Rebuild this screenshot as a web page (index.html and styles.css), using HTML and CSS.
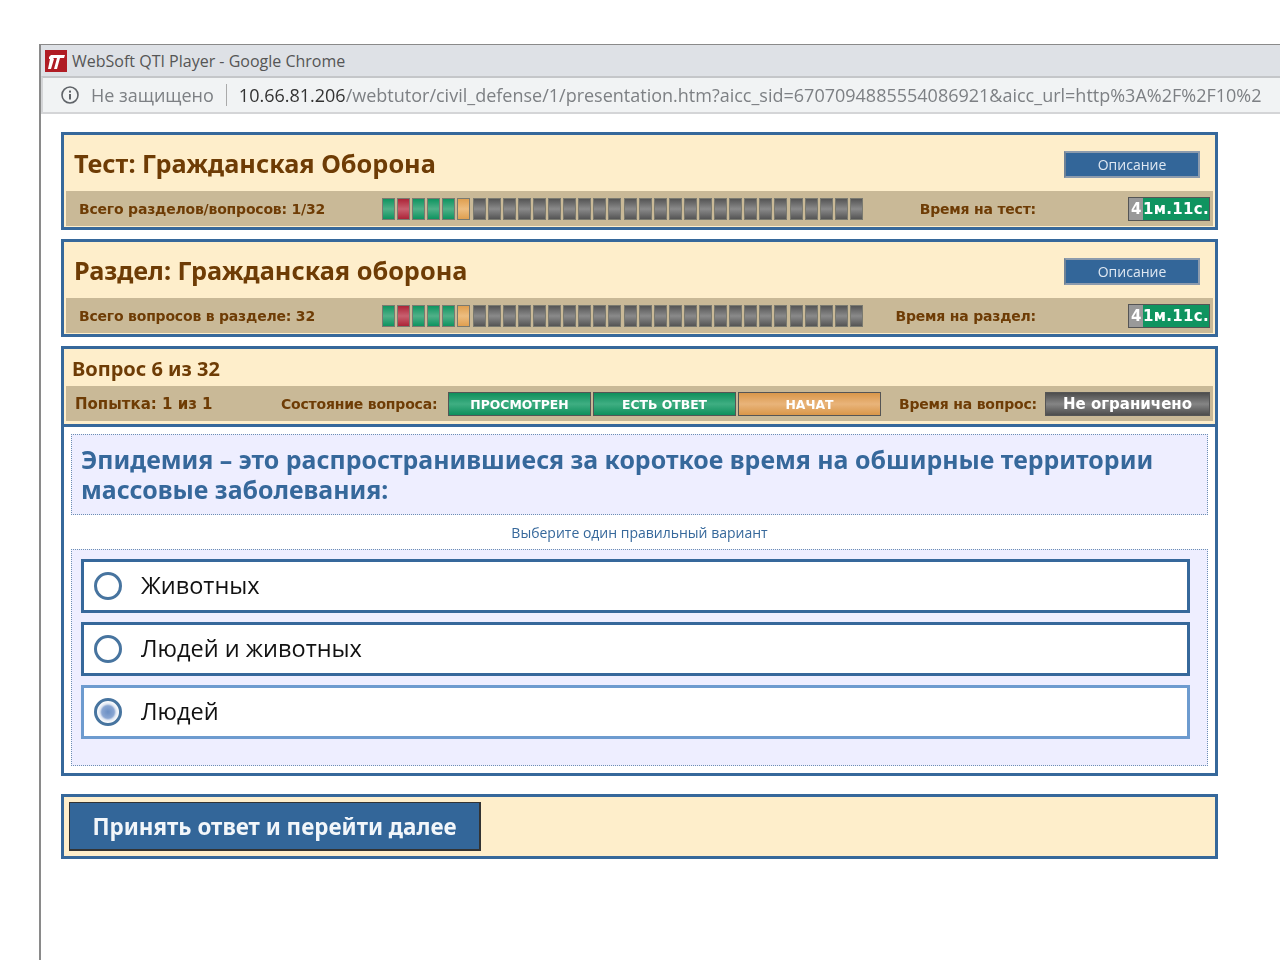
FILE: index.html
```html
<!DOCTYPE html>
<html lang="ru">

<head>
    <meta charset="UTF-8">
    <title>WebSoft QTI Player - Google Chrome</title>
    <link rel="stylesheet" href="styles.css">
</head>

<body>
    <div class="window">
        <div class="titlebar">
            <svg class="logo" width="22" height="22" viewBox="0 0 22 22">
                <rect width="22" height="22" fill="#b01c24"/>
                <path d="M5 9h4l-3 10H3z M4 7l2-2h14l-1 3h-4l-3 11H9l3-11H9l-1 1H4z" fill="#fff"/>
            </svg>
            <span>WebSoft QTI Player - Google Chrome</span>
        </div>
        <div class="addressbar">
            <svg class="info" width="20" height="20" viewBox="0 0 20 20">
                <circle cx="10" cy="10" r="8" fill="none" stroke="#5f6368" stroke-width="1.6"/>
                <rect x="9" y="9" width="2" height="5.5" fill="#5f6368"/>
                <rect x="9" y="5.6" width="2" height="2" fill="#5f6368"/>
            </svg>
            <span class="insecure">Не защищено</span>
            <span class="url"><b>10.66.81.206</b>/webtutor/civil_defense/1/presentation.htm?aicc_sid=6707094885554086921&amp;aicc_url=http%3A%2F%2F10%2</span>
        </div>

        <div class="content">
            <div class="panel">
                <div class="head">
                    <h1>Тест: Гражданская Оборона</h1>
                    <div class="descBtn">Описание</div>
                </div>
                <div class="bar">
                    <span class="barLabel firstLabel">Всего разделов/вопросов: 1/32</span>
                    <div class="progress"></div>
                    <span class="barLabel timeLabel wideGap">Время на тест:</span>
                    <div class="timer"><i>4</i>1м.11с.</div>
                </div>
            </div>

            <div class="panel">
                <div class="head">
                    <h1>Раздел: Гражданская оборона</h1>
                    <div class="descBtn">Описание</div>
                </div>
                <div class="bar">
                    <span class="barLabel firstLabel">Всего вопросов в разделе: 32</span>
                    <div class="progress"></div>
                    <span class="barLabel timeLabel wideGap">Время на раздел:</span>
                    <div class="timer"><i>4</i>1м.11с.</div>
                </div>
            </div>

            <div class="panel questionPanel">
                <div class="qHead">
                    <h2>Вопрос 6 из 32</h2>
                    <div class="bar qBar">
                        <span class="barLabel attempt">Попытка: 1 из 1</span>
                        <span class="barLabel stateLabel">Состояние вопроса:</span>
                        <div class="state green">ПРОСМОТРЕН</div>
                        <div class="state green">ЕСТЬ ОТВЕТ</div>
                        <div class="state orange">НАЧАТ</div>
                        <span class="barLabel timeLabel">Время на вопрос:</span>
                        <div class="state gray">Не ограничено</div>
                    </div>
                </div>
                <div class="qBody">
                    <div class="question">Эпидемия – это распространившиеся за короткое время на обширные территории массовые заболевания:</div>
                    <div class="hint">Выберите один правильный вариант</div>
                    <div class="answers">
                        <div class="answer"><span class="radio"></span>Животных</div>
                        <div class="answer"><span class="radio"></span>Людей и животных</div>
                        <div class="answer selected"><span class="radio"></span>Людей</div>
                    </div>
                </div>
            </div>

            <div class="panel footer">
                <div class="nextBtn">Принять ответ и перейти далее</div>
            </div>
        </div>
    </div>

    <script>
        // 6 answered cells, the rest are still grey
        const cells = ["green", "red", "green", "green", "green", "orange"]
        document.querySelectorAll(".progress").forEach(function (p) {
            for (let i = 0; i < 32; i++) {
                const c = document.createElement("span")
                c.className = "cell " + (cells[i] || "gray")
                p.appendChild(c)
            }
        })
    </script>
</body>

</html>
```

FILE: styles.css
```css
* {
    margin: 0;
    box-sizing: border-box;
}

html, body {
    height: 960px;
    overflow: hidden;
    background-color: white;
}

body {
    padding: 44px 0 0 39px;
    font-family: "DejaVu Sans", Verdana, sans-serif;
}

.window {
    width: 1241px;
    height: 916px;
    border-top: 1px solid #8a8a8a;
    border-left: 2px solid #8a8a8a;
    overflow: hidden;
    filter: blur(0.4px);
}

.titlebar {
    height: 31px;
    background-color: #dee1e6;
    display: flex;
    align-items: center;
    padding-left: 4px;
    gap: 5px;
    font-family: "Open Sans", sans-serif;
    font-size: 16px;
    color: #555;
}

.addressbar {
    height: 38px;
    background-color: #f1f3f4;
    border-top: 2px solid #c4c6c9;
    border-bottom: 2px solid #d4d5d7;
    border-left: 2px solid #d4d5d7;
    display: flex;
    align-items: center;
    padding-left: 17px;
    font-family: "Open Sans", sans-serif;
    font-size: 18px;
    white-space: nowrap;
    color: #7d8084;
}

.info {
    flex: none;
}

.insecure {
    margin-left: 11px;
    padding-right: 12px;
    border-right: 1px solid #aaa;
    line-height: 22px;
}

.url {
    margin-left: 12px;
}

.url b {
    font-weight: normal;
    color: #333;
}

.content {
    padding: 18px 0 0 20px;
    width: 1177px;
    display: flex;
    flex-direction: column;
    gap: 9px;
}

.panel {
    border: 3px solid #36689b;
    background-color: #feeecb;
    height: 98px;
    padding: 0 2px;
}

.head {
    height: 56px;
    display: flex;
    align-items: center;
    justify-content: space-between;
    padding: 0 13px 0 8px;
}

h1 {
    font-family: "Noto Sans", sans-serif;
    font-size: 25.3px;
    color: #6e3c05;
}

.descBtn {
    width: 136px;
    height: 27px;
    margin-top: 3px;
    background-color: #336699;
    border: 2px solid #8c9bad;
    border-left-color: #6f8296;
    color: #dfe8f2;
    font-family: "Open Sans", sans-serif;
    font-size: 14px;
    text-align: center;
    line-height: 23px;
}

.bar {
    height: 35px;
    background-color: #c9b997;
    display: flex;
    align-items: center;
    padding: 0 3px 0 13px;
    white-space: nowrap;
}

.barLabel {
    font-size: 14px;
    font-weight: bold;
    letter-spacing: -0.2px;
    color: #6e3c05;
}

.firstLabel {
    width: 303px;
}

.progress {
    display: flex;
    gap: 2.1px;
    width: 483px;
}

.cell {
    width: 13px;
    height: 22px;
    border: 1px solid #7a7a70;
}

.cell.green {
    background: linear-gradient(#0e9460, #50b088 50%, #0e9460);
}

.cell.red {
    background: linear-gradient(#ad2438, #c8606f 50%, #ad2438);
}

.cell.orange {
    background: linear-gradient(#df9f50, #edbd80 50%, #df9f50);
}

.cell.gray {
    background: linear-gradient(#555, #8a8a8a 50%, #555);
}

.timeLabel {
    margin-left: auto;
    margin-right: 8px;
}

.timeLabel.wideGap {
    margin-right: 92px;
}

.timer {
    flex: none;
    width: 82px;
    height: 24px;
    border: 1px solid #555;
    background-color: #0f9460;
    color: white;
    font-size: 15px;
    font-weight: bold;
    line-height: 22px;
    padding-left: 2px;
    letter-spacing: 0.3px;
}

.timer i {
    font-style: normal;
    display: inline-block;
    background-color: #999;
    margin-left: -2px;
    padding-left: 2px;
    width: 14px;
}

.questionPanel {
    height: 430px;
    background-color: white;
    padding: 0;
}

.qHead {
    height: 78px;
    background-color: #feeecb;
    border-bottom: 3px solid #36689b;
    padding: 0 2px;
}

h2 {
    font-family: "Noto Sans", sans-serif;
    font-size: 20px;
    color: #6e3c05;
    height: 37px;
    line-height: 39px;
    padding-left: 6px;
}

.qBar {
    height: 35px;
    padding: 0 3px 0 9px;
}

.attempt {
    width: 206px;
    font-size: 15px;
    letter-spacing: 0;
    margin-top: 1px;
}

.stateLabel {
    width: 157px;
    flex: none;
    margin-right: 10px;
}

.state {
    flex: none;
    width: 143px;
    height: 24px;
    margin-right: 2px;
    border: 1px solid #555;
    color: white;
    font-size: 12.4px;
    font-weight: bold;
    text-align: center;
    line-height: 23px;
}

.state.green {
    background: linear-gradient(#0e8f5c, #3fae82 50%, #0e8f5c);
}

.state.orange {
    background: linear-gradient(#d9974a, #e9b47a 50%, #d9974a);
    margin-right: 0;
}

.state.gray {
    width: 165px;
    margin-right: 0;
    font-size: 15px;
    background: linear-gradient(#4d4d4d, #858585 50%, #4d4d4d);
}

.qBody {
    padding: 7px 7px 0;
}

.question {
    height: 81px;
    background-color: #eeeeff;
    border: 1px dotted #6d8fb3;
    padding: 9px 9px 0;
    font-family: "Noto Sans", sans-serif;
    font-size: 24.9px;
    font-weight: bold;
    line-height: 30px;
    color: #36689b;
}

.hint {
    height: 34px;
    line-height: 36px;
    text-align: center;
    font-family: "Open Sans", sans-serif;
    font-size: 14px;
    color: #36689b;
}

.answers {
    height: 217px;
    background-color: #eeeeff;
    border: 1px dotted #6d8fb3;
    padding: 9px 17px 0 9px;
    display: flex;
    flex-direction: column;
    gap: 9px;
}

.answer {
    height: 54px;
    background-color: white;
    border: 3px solid #36689b;
    display: flex;
    align-items: center;
    padding: 0 0 3px 10px;
    font-family: "Open Sans", sans-serif;
    font-size: 23.5px;
    color: #111;
}

.answer.selected {
    border-color: #6d9bcf;
}

.radio {
    width: 28px;
    height: 28px;
    margin-top: 3px;
    border-radius: 50%;
    border: 3px solid #47749f;
    margin-right: 19px;
    background-color: white;
}

.selected .radio {
    background: radial-gradient(circle, #6b8fc4 0, #8aa6d2 40%, #dfe6f2 52%, white 70%);
}

.footer {
    height: 65px;
    margin-top: 9px;
    padding: 5px;
}

.nextBtn {
    width: 412px;
    height: 49px;
    background-color: #336699;
    border: 1px solid #333;
    border-width: 1px 2px 2px 1px;
    color: #f2f6fa;
    font-family: "Noto Sans", sans-serif;
    font-size: 22.4px;
    font-weight: bold;
    line-height: 48px;
    text-align: center;
}
```
